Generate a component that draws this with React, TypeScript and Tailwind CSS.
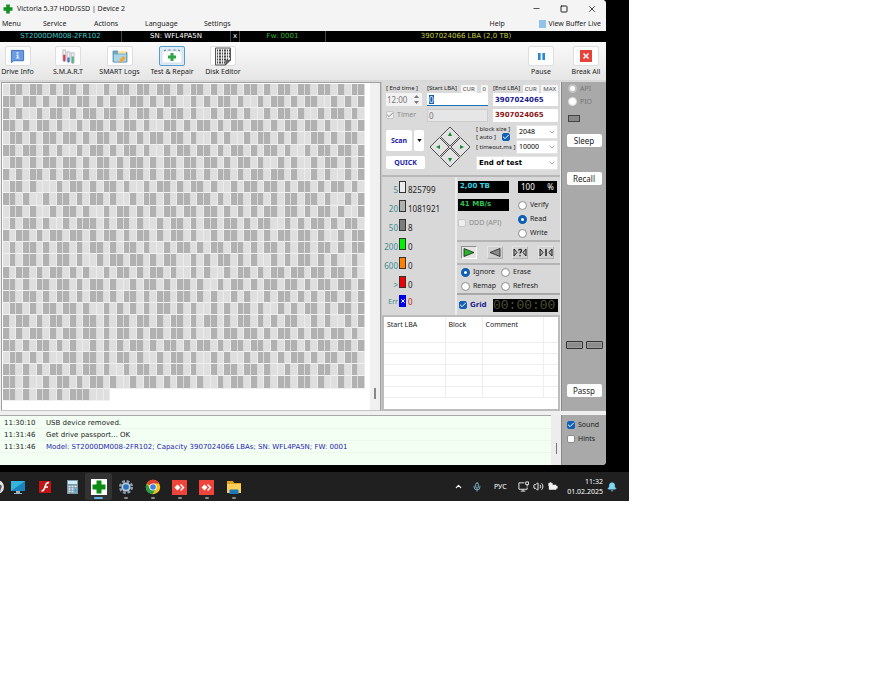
import React from 'react';
import { Bell, Check, ChevronDown, ChevronUp, Mic, Minus, Square, Volume2, X } from 'lucide-react';

const COLUMNS = 54;

// Indexes of the slower (dark) blocks, one list for each scanned line.
const SLOW_BLOCKS: number[][] = [
  [1,2,4,5,7,9,10,12,15,17,18,20,21,23,24,26,28,29,31,33,34,36,37,39,41,42,44,45,47,48,50,52,53],
  [0,1,3,4,6,8,9,11,12,14,16,19,20,22,24,25,28,30,32,33,35,38,40,41,43,45,46,49,51,53],
  [0,2,5,7,8,10,12,13,15,16,18,20,21,23,25,26,28,31,33,34,36,39,41,42,44,47,49,50,52],
  [0,1,3,5,6,8,11,13,14,16,18,19,21,24,25,27,29,30,32,34,35,37,38,40,42,43,45,46,48,51,53],
  [1,2,4,6,7,9,10,12,14,15,17,18,20,22,23,25,26,28,31,33,36,38,39,41,43,46,47,49,51,52],
  [0,1,3,4,6,8,11,13,14,16,18,19,21,24,26,27,29,30,32,34,35,37,39,40,42,45,47,48,50,51,53],
  [1,2,4,6,7,9,10,12,14,15,17,19,20,22,24,25,27,28,30,31,33,35,36,38,41,43,46,48,49,51,53],
  [0,2,4,5,7,9,10,12,14,15,17,19,20,22,24,25,27,28,30,32,33,35,37,38,40,41,43,46,48,51,53],
  [1,2,4,8,10,11,13,15,16,18,21,23,24,26,28,29,31,34,36,37,39,40,42,44,45,47,49,50,52],
  [0,1,3,6,8,9,11,13,14,16,19,21,22,24,26,27,29,30,32,34,35,37,38,40,42,43,45,46,48,51,53],
  [1,2,4,7,9,10,12,15,17,18,20,22,24,25,27,28,30,31,33,35,37,39,40,42,43,45,47,48,50,53],
  [1,3,4,6,9,11,12,13,15,17,18,20,23,25,26,28,30,31,33,34,36,38,39,42,44,46,47,49,51,52],
  [0,2,3,5,7,8,10,11,13,15,16,18,20,21,23,25,26,28,31,33,34,36,37,39,41,42,44,45,47,50,52,53],
  [1,3,4,6,8,9,11,13,14,16,18,19,21,24,26,27,29,31,32,34,35,37,39,40,42,44,45,47,48,50,52,53],
  [1,3,4,6,8,9,11,14,16,17,19,20,22,24,25,28,30,32,33,35,37,40,42,44,45,47,49,52],
  [0,2,3,5,7,8,10,12,15,17,18,20,22,23,25,28,30,33,35,36,38,40,41,43,44,46,47,49,50,52],
  [0,1,3,5,6,8,9,11,13,14,16,19,21,22,24,26,27,29,32,34,35,37,39,40,42,43,45,47,48,50,51,53],
  [0,1,3,4,6,8,9,11,13,14,16,18,19,21,23,24,26,27,29,31,34,36,39,41,42,44,46,48,49,51,53],
  [1,2,4,6,7,9,10,12,15,17,19,21,23,24,26,28,31,33,35,36,38,41,43,45,46,48,50,51,53],
  [0,2,3,5,7,8,10,12,13,15,17,18,20,21,23,25,26,28,30,31,33,35,36,38,40,42,43,46,48,51,53],
  [0,2,4,5,7,9,10,12,13,15,17,18,20,22,23,25,26,28,31,33,34,36,37,39,41,42,44,46,47,49,50,52],
  [0,1,3,5,6,8,10,13,15,17,19,20,22,24,25,27,29,30,32,34,35,37,38,40,42,43,45,47,48,50,51,53],
  [1,2,4,6,9,10,12,13,15,17,18,20,23,25,26,28,31,33,36,38,39,41,43,44,46,48,49,51,52],
  [0,1,3,5,7,8,10,12,13,15,18,20,21,23,25,26,28,31,33,34,36,37,39,42,44,45,47,48,50,52],
  [0,1,3,6,8,9,11,13,14,16,19,21,22,24,26,27,29,32,34,35,37,39,41,42,44,45,47,50,52,53],
  [0,1,3,5,6,8,10,11,12],
];
const LAST_LINE_BLOCKS = 16;

function BlockMap() {
  return (
    <div className="flex w-[362px] flex-col">
      {SLOW_BLOCKS.map((slow, r) => (
        <div key={r} className={`grid ${r % 5 === 4 ? 'h-[13px]' : 'h-[12px]'} grid-cols-[repeat(54,minmax(0,1fr))]`}>
          {Array.from({ length: r === SLOW_BLOCKS.length - 1 ? LAST_LINE_BLOCKS : COLUMNS }, (_, c) => (
            <span
              key={c}
              className={`border-r border-b ${slow.includes(c) ? 'border-r-[#dadada] border-b-[#f2f2f2] bg-[#b1b1b1]' : 'border-r-[#ececec] border-b-[#f2f2f2] bg-[#dfdfdf]'}`}
            />
          ))}
        </div>
      ))}
    </div>
  );
}

function CheckBox({ label, name, checked, disabled, className = '' }: { label?: React.ReactNode; name?: string; checked?: boolean; disabled?: boolean; className?: string }) {
  return (
    <label className={`flex items-center gap-[3px] ${disabled ? 'text-[#8c8c8c]' : ''} ${className}`}>
      <span className="relative flex size-[8px] shrink-0">
        <input
          type="checkbox"
          aria-label={name}
          defaultChecked={checked}
          disabled={disabled}
          className={`size-[8px] appearance-none rounded-[2px] border ${
            disabled ? 'border-[#c8c8c8] bg-[#eeeeee]' : checked ? 'border-[#1160b5] bg-[#1160b5]' : 'border-[#8a8a8a] bg-white'
          }`}
        />
        {checked && (
          <Check className={`pointer-events-none absolute inset-0 size-[8px] ${disabled ? 'text-[#8c8c8c]' : 'text-white'}`} strokeWidth={3} />
        )}
      </span>
      {label}
    </label>
  );
}

function Radio({ label, name, checked, disabled }: { label: string; name: string; checked?: boolean; disabled?: boolean }) {
  const ring = disabled
    ? checked ? 'border-2 border-[#c4c4c4] bg-white' : 'border border-[#d8d8d8] bg-white'
    : checked ? 'border-[3px] border-[#0c5fb3] bg-white' : 'border border-[#8a8a8a] bg-white';
  return (
    <label className={`flex items-center gap-[3px] ${disabled ? 'text-[#777777]' : ''}`}>
      <input type="radio" name={name} defaultChecked={checked} disabled={disabled} className={`size-[9px] shrink-0 appearance-none rounded-full ${ring}`} />
      {label}
    </label>
  );
}

function Drop({ label, value, className }: { label: string; value: string; className: string }) {
  return (
    <span className={`relative flex ${className}`}>
      <select aria-label={label} className="w-full appearance-none border border-[#e4e4e4] bg-white pl-[2px] text-black">
        <option>{value}</option>
      </select>
      <ChevronDown className="pointer-events-none absolute top-[3px] right-[2px] size-[8px] text-[#777777]" />
    </span>
  );
}

const toolIcons: Record<string, React.ReactNode> = {
  info: (
    <svg viewBox="0 0 16 16" className="size-[15px]">
      <path d="M1.500 1.500h13v11H4l-2.500 2z" fill="#6b9be0" stroke="#3f70bd" />
      <path d="M7 3.500h2v1.500H7zM6.500 6H9v3h1v1H6.500V9h1V7h-1z" fill="#e9f3ff" />
    </svg>
  ),
  smart: (
    <svg viewBox="0 0 16 16" className="size-[15px]">
      <path d="M2 1h3v11a1.500 1.500 0 0 1-3 0z" fill="#f0f0f4" stroke="#9297a5" strokeWidth=".6" />
      <path d="M2.300 6h2.400v6a1.200 1.200 0 0 1-2.400 0z" fill="#dd3f4b" />
      <path d="M6.500 3h3v10a1.500 1.500 0 0 1-3 0z" fill="#f0f0f4" stroke="#9297a5" strokeWidth=".6" />
      <path d="M6.800 9h2.400v4a1.200 1.200 0 0 1-2.400 0z" fill="#4b78c6" />
      <path d="M11 4h3v10a1.500 1.500 0 0 1-3 0z" fill="#f0f0f4" stroke="#9297a5" strokeWidth=".6" />
      <path d="M11.300 8h2.400v6a1.200 1.200 0 0 1-2.400 0z" fill="#58b783" />
    </svg>
  ),
  logs: (
    <svg viewBox="0 0 16 16" className="size-[16px]">
      <path d="M1 3h5l1.500 1.500H15V14H1z" fill="#76aac9" stroke="#4d83a5" strokeWidth=".7" />
      <path d="M6 3h8v4H6z" fill="#f7e3a2" />
      <path d="M1.500 6h13v8h-13z" fill="#a9d6e8" stroke="#5f9fba" strokeWidth=".7" />
      <path d="M7 15l1-3.500 3-3.500 2.500 2-3 3.500z" fill="#f4a52c" />
    </svg>
  ),
  test: (
    <svg viewBox="0 0 22 16" className="h-[16px] w-[22px]">
      <path d="M1 3h20v12H1z" fill="#fdfefe" stroke="#c7d9e5" strokeWidth=".7" />
      <path d="M3 3l2-1.200M7.500 2h2M12.500 2h2M17 1.800L19 3" stroke="#5c6c78" fill="none" />
      <path d="M9.500 5h3v2.500H15v3h-2.500V13h-3v-2.500H7v-3h2.500z" fill="#31a447" />
    </svg>
  ),
  editor: (
    <svg viewBox="0 0 18 19" className="h-[19px] w-[18px]">
      <path d="M1.500 1h15v12l-5 5h-10z" fill="#ececec" stroke="#555" />
      <path d="M3 3.500h13M3 6.500h13M3 9.500h13M3 12.500h12M3 15.500h8" stroke="#444" strokeWidth="2" strokeDasharray="1 1 2 1" />
      <path d="M17 12.500l-6 5.500c1.500-2 0-3.500 1-5 1.500 1 3 0 5-.5z" fill="#666" stroke="#333" strokeWidth=".5" />
    </svg>
  ),
  pause: (
    <svg viewBox="0 0 8 8" className="size-[7px]">
      <path d="M0 0h3v8H0zM5 0h3v8H5z" fill="#2b86d3" />
    </svg>
  ),
  stop: (
    <svg viewBox="0 0 12 12" className="size-[12px]">
      <path d="M0 0h12v12H0z" fill="#e5433a" />
      <path d="M3.500 3.500l5 5M8.500 3.500l-5 5" stroke="#fff" strokeWidth="1.500" />
    </svg>
  ),
};

function Tool({ icon, label, width, active }: { icon: string; label: string; width: string; active?: boolean }) {
  return (
    <button type="button" className={`flex flex-col items-center gap-[1px] whitespace-nowrap ${width}`}>
      <span className={`flex h-[20px] w-[26px] items-center justify-center rounded-[2px] border ${active ? 'border-[#5b9bc8] bg-[#dcebf6]' : 'border-[#dedede] bg-[#fdfdfd]'}`}>
        {toolIcons[icon]}
      </span>
      <span className="leading-[10px]">{label}</span>
    </button>
  );
}

const speeds = [
  { limit: '5', count: '825799', fill: 'bg-[#ececec]' },
  { limit: '20', count: '1081921', fill: 'bg-[#b0b0b0]' },
  { limit: '50', count: '8', fill: 'bg-[#7c7c7c]' },
  { limit: '200', count: '0', fill: 'bg-[#00f400]' },
  { limit: '600', count: '0', fill: 'bg-[#ff8000]' },
  { limit: '>', count: '0', fill: 'bg-[#f00000]' },
];

const log = [
  { time: '11:30:10', text: 'USB device removed.', tone: 'text-[#222222]' },
  { time: '11:31:46', text: 'Get drive passport... OK', tone: 'text-[#222222]' },
  { time: '11:31:46', text: 'Model: ST2000DM008-2FR102; Capacity 3907024066 LBAs; SN: WFL4PA5N; FW: 0001', tone: 'text-[#2424b0]' },
];

function SideButton({ children }: { children: string }) {
  return <button type="button" className="h-[13px] w-[35px] rounded-[2px] bg-white text-[8px] leading-[12px]">{children}</button>;
}

function MiniButton({ children }: { children: string }) {
  return <button type="button" className="h-[8px] rounded-[1px] bg-[#f6f6f6] px-[2px] text-[6px] leading-[8px] text-[#444444]">{children}</button>;
}

function Parameters() {
  return (
    <section className="flex h-[95px] flex-col border-b-2 border-[#b8b8b8] bg-[#dadada] pt-[2px] pr-[2px] pl-[4px]">
      <div className="grid grid-cols-[36px_61px_65px] gap-x-[5px] whitespace-nowrap">
        <label htmlFor="endtime" className="text-[6px] leading-[9px]">[ End time ]</label>
        <span className="flex items-center justify-between">
          <label htmlFor="start" className="text-[6px] leading-[9px]">[Start LBA]</label>
          <MiniButton>CUR</MiniButton>
          <MiniButton>0</MiniButton>
        </span>
        <span className="flex items-center justify-between">
          <label htmlFor="end" className="text-[6px] leading-[9px]">[End LBA]</label>
          <MiniButton>CUR</MiniButton>
          <MiniButton>MAX</MiniButton>
        </span>
        <span className="flex h-[13px] items-center bg-[#f3f3f3] text-[#777777]">
          <input id="endtime" defaultValue="12:00" className="w-[28px] pl-[1px] text-[8px]" />
          <span className="flex flex-col">
            <svg viewBox="0 0 5 9" className="h-[9px] w-[5px]"><path d="M0 3h5L2.500 0zM0 6h5L2.500 9z" fill="#777777" /></svg>
          </span>
        </span>
        <span className="flex h-[13px] items-center border-b border-[#1a6fb5] bg-white pl-[2px]">
          <span className="flex h-[9px] w-[5px] bg-[#1160b5]">
            <input id="start" defaultValue="0" className="w-full text-[8px] leading-[9px] text-white" />
          </span>
        </span>
        <input id="end" defaultValue="3907024065" className="h-[13px] bg-white pl-[2px] font-['DejaVu_Sans',sans-serif] text-[7px] font-bold text-[#1a1a8c]" />
      </div>
      <div className="mt-[2px] grid h-[14px] grid-cols-[36px_61px_65px] items-center gap-x-[5px]">
        <CheckBox label="Timer" checked disabled />
        <input aria-label="Timer LBA" defaultValue="0" className="h-[13px] border border-[#cccccc] bg-[#e6e6e6] pl-[1px] text-[8px] text-[#777777]" />
        <input aria-label="Current LBA" defaultValue="3907024065" className="h-[13px] bg-white pl-[2px] font-['DejaVu_Sans',sans-serif] text-[7px] font-bold text-[#8a1616]" />
      </div>
      <div className="mt-[2px] flex">
        <div className="flex w-[39px] flex-col gap-[5px] pt-[6px] font-bold text-[#2222a8]">
          <div className="flex gap-[2px]">
            <button type="button" className="h-[21px] w-[26px] rounded-[2px] bg-white">Scan</button>
            <button type="button" aria-label="Scan options" className="flex h-[21px] w-[10px] items-center justify-center rounded-[2px] bg-white">
              <svg viewBox="0 0 6 4" className="h-[3px] w-[5px]"><path d="M0 0h6L3 4z" fill="#111" /></svg>
            </button>
          </div>
          <button type="button" className="h-[13px] rounded-[2px] bg-white text-[7px] leading-[12px]">QUICK</button>
        </div>
        <svg viewBox="0 0 42 42" className="mt-[2px] ml-[4px] h-[42px] w-[42px] shrink-0">
          <g fill="#e2e2e2" stroke="#4e4e4e" strokeWidth="1">
            <path d="M21 1l9.500 9.500-9.500 9.500-9.500-9.500z" />
            <path d="M31.500 11.500L41 21l-9.500 9.500L22 21z" />
            <path d="M10.500 11.500L20 21l-9.500 9.500L1 21z" />
            <path d="M21 22l9.500 9.500L21 41l-9.500-9.500z" />
          </g>
          <path d="M19 10h4l-2-4zM19 32h4l-2 4zM11 19v4l-4-2zM31 19v4l4-2z" fill="#168a2c" />
        </svg>
        <div className="ml-auto flex w-[82px] flex-col gap-[1px] pt-[1px]">
          <div className="flex justify-between">
            <div className="whitespace-nowrap text-[6px] leading-[8px]">
              <div>[ block size ]</div>
              <div className="flex items-center gap-[6px]">
                [ auto ]
                <CheckBox name="Auto" checked />
              </div>
            </div>
            <Drop label="Block size" value="2048" className="h-[14px] w-[42px]" />
          </div>
          <div className="-mt-[2px] flex items-center justify-between">
            <span className="whitespace-nowrap text-[6px]">[ timeout.ms ]</span>
            <Drop label="Timeout" value="10000" className="h-[14px] w-[42px]" />
          </div>
          <Drop label="At the end" value="End of test" className="mt-[1px] h-[14px] font-['DejaVu_Sans',sans-serif] text-[7px] font-bold" />
        </div>
      </div>
    </section>
  );
}

function PlayButton({ label, children, on }: { label: string; children: React.ReactNode; on?: boolean }) {
  return (
    <button type="button" aria-label={label} className={`flex h-[13px] w-[16px] items-center justify-center border ${on ? 'border-[#8f8f8f] border-r-white border-b-white bg-[#e4e4e4]' : 'border-[#e6e6e6] border-r-[#b0b0b0] border-b-[#b0b0b0] bg-[#cfcfcf]'}`}>
      {children}
    </button>
  );
}

function Statistics() {
  return (
    <section className="flex h-[138px] bg-[#d8d8d8]">
      <div className="flex w-[73px] flex-col pt-[4px] text-[8px]">
        {speeds.map((s) => (
          <div key={s.limit} className="flex h-[19px] items-start">
            <span className="w-[17px] pt-[4px] pr-px text-right leading-[10px] text-[#3b8c92]">{s.limit}</span>
            <span className={`h-[12px] w-[7px] shrink-0 border border-[#333333] ${s.fill}`} />
            <span className="pt-[4px] pl-[2px] leading-[10px]">{s.count}</span>
          </div>
        ))}
        <div className="flex items-start">
          <span className="w-[17px] pt-[2px] pr-px text-right text-[7px] leading-[10px] text-[#3b8c92]">Err</span>
          <span className="flex h-[12px] w-[7px] items-center justify-center bg-[#0000e0] text-white"><X className="size-[6px]" strokeWidth={4} /></span>
          <span className="pt-[2px] pl-[2px] leading-[10px] text-[#d02020]">0</span>
        </div>
      </div>
      <div className="flex flex-1 flex-col border-l-2 border-[#ececec]">
        <div className="flex h-[63px] justify-between pr-[3px] pl-[1px]">
          <div className="flex w-[51px] flex-col pt-[4px]">
            <output className="h-[12px] bg-black pl-[2px] font-['DejaVu_Sans',sans-serif] text-[7px] leading-[11px] font-bold text-[#35d6e0]">2,00 TB</output>
            <output className="mt-[6px] h-[12px] bg-black pl-[2px] font-['DejaVu_Sans',sans-serif] text-[7px] leading-[11px] font-bold text-[#33c055]">41 MB/s</output>
            <CheckBox label="DDD (API)" disabled className="mt-[7px] whitespace-nowrap" />
          </div>
          <div className="flex w-[39px] flex-col pt-[4px]">
            <output className="mb-[5px] flex h-[12px] justify-between bg-black px-[3px] text-[8px] leading-[12px] text-white"><span>100</span><span>%</span></output>
            <div className="flex flex-col [&>label]:h-[14px]">
              <Radio name="mode" label="Verify" />
              <Radio name="mode" label="Read" checked />
              <Radio name="mode" label="Write" />
            </div>
          </div>
        </div>
        <div className="flex h-[23px] items-center justify-between border-t-2 border-[#b4b4b4] pr-[6px] pl-[4px]">
          <PlayButton label="Forward" on><svg viewBox="0 0 12 9" className="h-[9px] w-[12px]"><path d="M1 .5l10 4-10 4z" fill="#28b428" stroke="#222" strokeWidth=".8" /></svg></PlayButton>
          <PlayButton label="Backward"><svg viewBox="0 0 12 9" className="h-[9px] w-[12px]"><path d="M11 .5l-10 4 10 4z" fill="#8b8b8b" stroke="#222" strokeWidth=".8" /></svg></PlayButton>
          <PlayButton label="Random">
            <svg viewBox="0 0 14 9" className="h-[9px] w-[14px]"><path d="M1 1l3 3.500-3 3.500zM13 1l-3 3.500 3 3.500z" fill="#bbb" stroke="#222" /><path d="M5.500 2.500C6 .8 8.500 1 8.500 2.800 8.500 4 7 4 7 5.500M7 7v1.200" fill="none" stroke="#222" strokeWidth="1.300" /></svg>
          </PlayButton>
          <PlayButton label="Butterfly">
            <svg viewBox="0 0 14 9" className="h-[9px] w-[14px]"><path d="M1 1l3 3.500-3 3.500zM13 1l-3 3.500 3 3.500z" fill="#bbb" stroke="#222" /><path d="M7 1v7" stroke="#222" strokeWidth="1.500" /></svg>
          </PlayButton>
        </div>
        <div className="grid h-[30px] grid-cols-[40px_50px] content-center gap-y-[1px] border-t-2 border-[#b4b4b4] pl-[4px] [&>label]:h-[13px]">
          <Radio name="defect" label="Ignore" checked />
          <Radio name="defect" label="Erase" />
          <Radio name="defect" label="Remap" />
          <Radio name="defect" label="Refresh" />
        </div>
        <div className="flex flex-1 items-center justify-between border-t-2 border-[#a8a8a8] pr-[2px] pl-[2px]">
          <CheckBox checked label={<b className="font-['DejaVu_Sans',sans-serif] text-[7px] text-[#1c1c90]">Grid</b>} />
          <output className="h-[13px] w-[65px] bg-black font-['Liberation_Mono',monospace] text-[13px] leading-[13px] text-[#4c5238]">00:00:00</output>
        </div>
      </div>
    </section>
  );
}

function DefectTable() {
  return (
    <div className="flex-1 overflow-hidden border-2 border-[#bcbcbc] bg-white">
      <table className="w-full table-fixed border-collapse text-left [&_td]:border-r [&_td]:border-b [&_td]:border-[#eeeeee] [&_th]:border-r [&_th]:border-b [&_th]:border-[#eeeeee]">
        <thead>
          <tr className="h-[25px] align-top [&_th]:pt-[3px] [&_th]:pl-[3px] [&_th]:font-normal">
            <th className="w-[61px]">Start LBA</th>
            <th className="w-[37px]">Block</th>
            <th className="w-[61px]">Comment</th>
            <th className="border-r-0!" />
          </tr>
        </thead>
        <tbody>
          {[0, 1, 2, 3, 4].map((r) => (
            <tr key={r} className="h-[11px]"><td /><td /><td /><td className="border-r-0!" /></tr>
          ))}
        </tbody>
      </table>
    </div>
  );
}

function Led() {
  return <span className="h-[8px] w-[17px] rounded-[1px] border border-[#333333] bg-[#9c9c9c] p-[1px]"><span className="block h-full bg-[#8c8c8c]" /></span>;
}

function TaskIcon({ children, label, running, active }: { children: React.ReactNode; label: string; running?: boolean; active?: boolean }) {
  return (
    <button type="button" aria-label={label} className={`flex h-[27px] w-[27px] flex-col items-center justify-end gap-[2px] pb-px ${active ? 'rounded-[2px] bg-[#323232]' : ''}`}>
      <svg viewBox="0 0 16 16" className="size-[16px]">{children}</svg>
      <span className={`h-[2px] rounded-full ${active ? 'w-[9px] bg-[#62b4ec]' : running ? 'w-[4px] bg-[#8c8c8c]' : 'w-[4px]'}`} />
    </button>
  );
}

const remote = (
  <>
    <path d="M0 1h15v15H0z" fill="#ef443b" />
    <path d="M5.500 5.500l3 3-3 3-3-3z" fill="#fff" />
    <path d="M8 6l1-1 3.500 3.500L9 12l-1-1 2.500-2.500z" fill="#fff" />
  </>
);

function Taskbar() {
  return (
    <footer className="flex h-[29px] items-center overflow-hidden bg-[#202020] text-white">
      <div className="-ml-[15px] flex shrink-0">
        <div className="-mr-[8px]">
          <TaskIcon label="Archive"><circle cx="6" cy="8" r="7" fill="#e7e4ea" /><path d="M6 3l5 4-2 6-5-5z" fill="#5d5862" /></TaskIcon>
        </div>
        <TaskIcon label="Desktop"><path d="M1 2h14v10H1z" fill="#35b4dc" /><path d="M1 12L15 2v10z" fill="#1a83bd" /><path d="M6 12h4v2h2v1H4v-1h2z" fill="#9db3bf" /></TaskIcon>
        <TaskIcon label="Flash"><path d="M2 2h12v12H2z" fill="#c01618" /><path d="M12 3.500c-3.500 0-3.500 3-4 4.500-.6 2-1.300 4-3.500 4M7.500 8H11" fill="none" stroke="#fff" strokeWidth="1.600" /></TaskIcon>
        <TaskIcon label="Calculator">
          <path d="M3 1h11v14H3z" fill="#7d99a9" /><path d="M4 2h9v3H4z" fill="#cdeef8" />
          <path d="M4.500 7.500h8M4.500 10h8M4.500 12.500h8" stroke="#e8f0f4" strokeWidth="1.600" strokeDasharray="2 1" /><path d="M10.500 9.200h2v4h-2z" fill="#3ba2d8" />
        </TaskIcon>
        <TaskIcon label="Victoria" active><path d="M0 0h16v16H0z" fill="#fff" /><path d="M5.500 1.500h5v4h4v5h-4v4h-5v-4h-4v-5h4z" fill="#0b8a14" /></TaskIcon>
        <TaskIcon label="Settings" running>
          <circle cx="8" cy="8" r="5.800" fill="none" stroke="#8b9fb3" strokeWidth="2.500" strokeDasharray="2.800 1.750" />
          <circle cx="8" cy="8" r="4.600" fill="#b9c9d7" /><circle cx="8" cy="8" r="2.800" fill="#2374bd" />
        </TaskIcon>
        <TaskIcon label="Chrome" running>
          <circle cx="8" cy="8" r="7.200" fill="#f3c31c" />
          <path d="M8 8L1.800 4.400A7.200 7.200 0 0 1 14.200 4.400H8z" fill="#df3e30" />
          <path d="M8 8L4.900 9.800 1.800 4.400A7.200 7.200 0 0 0 7.500 15.200L11 9.800z" fill="#2b9b4c" />
          <circle cx="8" cy="8" r="3.600" fill="#fff" /><circle cx="8" cy="8" r="2.800" fill="#3f80e6" />
        </TaskIcon>
        <TaskIcon label="AnyDesk" running>{remote}</TaskIcon>
        <TaskIcon label="AnyDesk session" running>{remote}</TaskIcon>
        <TaskIcon label="Explorer" running>
          <path d="M1 2h6l1 2h7v10H1z" fill="#e3a41b" /><path d="M1 5h14v9H1z" fill="#fbd05a" /><path d="M3.500 15v-3.500q0-1 1-1h7q1 0 1 1V15z" fill="#1d77ba" />
        </TaskIcon>
      </div>
      <div className="ml-auto flex items-center pr-[12px]">
        <ChevronUp className="mr-[9px] size-[9px]" strokeWidth={3} />
        <Mic className="mr-[12px] size-[10px] text-[#86c5dc]" />
        <span className="mr-[10px] w-[14px] text-[7px]">РУС</span>
        <svg viewBox="0 0 12 12" className="mr-[4px] size-[11px]" fill="none" stroke="#f0f0f0"><path d="M7 2H1v7h9V7M3 11h5M5.500 9v2M8.500 1h3v3h-3zM10 4v2" /></svg>
        <Volume2 className="mr-[4px] size-[11px]" />
        <svg viewBox="0 0 12 10" className="mr-[8px] h-[9px] w-[10px]"><path d="M1 3h9v1.500h1.500v3H10V9H1z" fill="#f0f0f0" /><path d="M3 0v3M1 1h4v3H1z" stroke="#f0f0f0" fill="#f0f0f0" /></svg>
        <div className="mr-[4px] w-[37px] text-right text-[7px] leading-[10px] whitespace-nowrap">
          <div>11:32</div>
          <div>01.02.2025</div>
        </div>
        <Bell className="size-[10px] fill-[#7fd6f5] text-[#7fd6f5]" />
      </div>
    </footer>
  );
}

export default function App() {
  return (
    <main className="min-h-screen bg-white">
      <div className="w-full max-w-[629px] overflow-hidden bg-black font-['Noto_Sans',sans-serif] text-[7px] leading-[10px] text-[#222222]">
        <div className="mr-[23px] mb-[7px] flex flex-col overflow-hidden rounded-r-[4px] bg-[#f0f0f0]">
          <header className="flex h-[17px] items-center bg-[#f4f4f4] pr-[9px] pl-[3px]">
            <svg viewBox="0 0 10 10" className="size-[10px]"><path d="M3.200.5h3.600v2.700h2.700v3.600H6.800v2.700H3.200V6.800H.5V3.200h2.700z" fill="#158f22" /></svg>
            <h1 className="ml-[4px] text-[7px] font-normal">Victoria 5.37 HDD/SSD | Device 2</h1>
            <div className="ml-auto flex items-center gap-[19px]">
              <button type="button" aria-label="Minimize"><Minus className="size-[9px]" /></button>
              <button type="button" aria-label="Maximize"><Square className="size-[8px]" strokeWidth={3} /></button>
              <button type="button" aria-label="Close"><X className="size-[10px]" /></button>
            </div>
          </header>
          <nav className="flex h-[14px] items-center bg-[#f4f4f4] pr-[5px] pl-[2px] text-left whitespace-nowrap [&>button]:text-left">
            <button type="button" className="w-[41px]">Menu</button>
            <button type="button" className="w-[51px]">Service</button>
            <button type="button" className="w-[51px]">Actions</button>
            <button type="button" className="w-[59px]">Language</button>
            <button type="button">Settings</button>
            <button type="button" className="ml-auto w-[49px]">Help</button>
            <button type="button" className="flex items-center gap-[3px]">
              <span className="h-[8px] w-[7px] bg-[#8dc4e8]" />
              View Buffer Live
            </button>
          </nav>
          <div className="flex h-[11px] bg-black text-center font-['DejaVu_Sans',sans-serif] leading-[11px] text-white [&>span+span]:border-l [&>span+span]:border-[#444444]">
            <span className="w-[121px] text-[#3fc9c9]">ST2000DM008-2FR102</span>
            <span className="w-[109px]">SN: WFL4PA5N</span>
            <span className="w-[9px]">x</span>
            <span className="w-[86px] text-[#35b835]">Fw: 0001</span>
            <span className="flex-1 text-[#c8cc48]">3907024066 LBA (2,0 TB)</span>
          </div>
          <div className="flex h-[40px] items-start border-b-2 border-[#d8d8d8] bg-linear-to-b from-[#fafafa] to-[#e6e6e6] pt-[4px]">
            <div className="-ml-[8px] flex">
              <Tool icon="info" label="Drive Info" width="w-[51px]" />
              <Tool icon="smart" label="S.M.A.R.T" width="w-[50px]" />
              <Tool icon="logs" label="SMART Logs" width="w-[53px]" />
              <Tool icon="test" label="Test & Repair" width="w-[52px]" active />
              <Tool icon="editor" label="Disk Editor" width="w-[50px]" />
            </div>
            <div className="ml-auto flex">
              <Tool icon="pause" label="Pause" width="w-[50px]" />
              <Tool icon="stop" label="Break All" width="w-[40px]" />
            </div>
          </div>
          <div className="flex h-[329px]">
            <div className="ml-px flex min-w-0 flex-1 justify-between border border-[#a0a0a0] border-b-[#c4c4c4] bg-white pt-px pl-px">
              <BlockMap />
              <div className="-mt-px flex w-[10px] items-end justify-center bg-[#f0f0f0] pb-[11px]">
                <span className="h-[11px] w-[2px] bg-[#888888]" />
              </div>
            </div>
            <div className="flex w-[179px] flex-col border-l border-[#c4c4c4]">
              <Parameters />
              <Statistics />
              <DefectTable />
            </div>
            <aside className="ml-[1px] flex w-[45px] flex-col items-center border-l border-[#888888] bg-[#a9a9a9]">
              <div className="flex w-full flex-col pl-[6px] [&>label]:h-[13px]">
                <Radio name="access" label="API" checked disabled />
                <Radio name="access" label="PIO" disabled />
                <span className="mt-[7px] h-[7px] w-[12px] border border-[#444444] bg-[#888888]" />
              </div>
              <div className="mt-[12px] flex flex-col gap-[25px]">
                <SideButton>Sleep</SideButton>
                <SideButton>Recall</SideButton>
              </div>
              <div className="mt-auto mb-[35px] flex gap-[3px]"><Led /><Led /></div>
              <div className="mb-[14px] flex"><SideButton>Passp</SideButton></div>
            </aside>
          </div>
          <div className="mt-[4px] flex h-[50px]">
            <div className="flex flex-1 flex-col border-t border-[#a8a8a8] bg-[#f4fff4] pt-px font-['DejaVu_Sans',sans-serif]">
              {log.map((l, i) => (
                <div key={i} className="flex h-[12px] items-center border-b border-[#edf8ed] pl-[4px]">
                  <time className="w-[42px]">{l.time}</time>
                  <span className={l.tone}>{l.text}</span>
                </div>
              ))}
            </div>
            <div className="flex w-[10px] items-end justify-center bg-[#ededed] pb-[11px]"><span className="h-[11px] w-px bg-[#777777]" /></div>
            <div className="flex w-[45px] flex-col border-l border-[#888888] bg-[#a9a9a9] pt-[3px] pl-[5px] [&>label]:h-[14px]">
              <CheckBox label="Sound" checked />
              <CheckBox label="Hints" />
            </div>
          </div>
        </div>
        <Taskbar />
      </div>
    </main>
  );
}
